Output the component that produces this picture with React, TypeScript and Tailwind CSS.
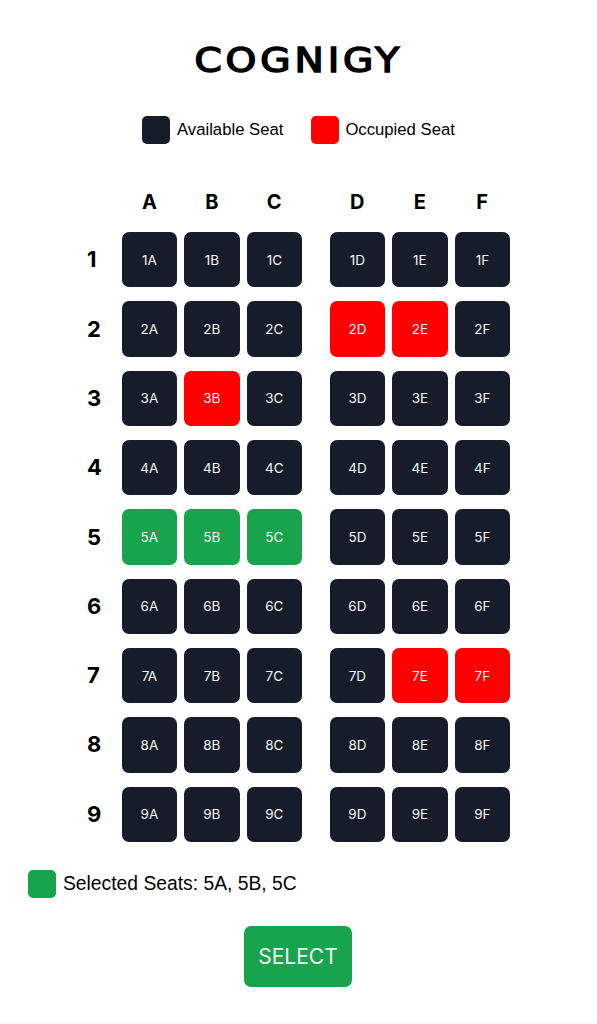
const columnsLeft = ["A", "B", "C"];
const columnsRight = ["D", "E", "F"];
const rows = [1, 2, 3, 4, 5, 6, 7, 8, 9];
const occupied = ["2D", "2E", "3B", "7E", "7F"];
const selected = ["5A", "5B", "5C"];

function Seat({ id }: { id: string }) {
  const color = occupied.includes(id)
    ? "bg-[#ff0000]"
    : selected.includes(id)
      ? "bg-[#17a44d]"
      : "bg-[#161c29]";
  return (
    <div
      className={`flex h-[55.4px] w-[55.4px] items-center justify-center rounded-[7px] font-['Inter',sans-serif] text-[13.5px] font-normal text-[#f3f4f6] ${color}`}
    >
      {id}
    </div>
  );
}

function Head({ c }: { c: string }) {
  return <div className="w-[55.4px] text-center text-[20px] leading-[24px] font-bold text-black">{c}</div>;
}

export default function App() {
  return (
    <div className="flex h-[1024px] w-[597px] flex-col overflow-hidden bg-white font-['Inter',sans-serif] text-black">
      <div className="mt-[38px] flex justify-center">
        <span className="scale-x-[1.15] font-['DejaVu_Sans',sans-serif] text-[34px] leading-[44px] font-normal tracking-[3.4px] [-webkit-text-stroke:1.5px_black]">
          COGNIGY
        </span>
      </div>

      <div className="mt-[34px] flex items-center pl-[142px] font-['Liberation_Sans',sans-serif] text-[16.7px] leading-[28px]">
        <div className="h-[28px] w-[28px] rounded-[5px] bg-[#161c29]" />
        <span className="ml-[7px]">Available Seat</span>
        <div className="ml-[28px] h-[28px] w-[28px] rounded-[5px] bg-[#ff0000]" />
        <span className="ml-[6px]">Occupied Seat</span>
      </div>

      <div className="mt-[46px] flex pl-[121.7px]">
        <div className="flex gap-[7px]">
          {columnsLeft.map((c) => (
            <Head key={c} c={c} />
          ))}
        </div>
        <div className="ml-[27.7px] flex gap-[7.1px]">
          {columnsRight.map((c) => (
            <Head key={c} c={c} />
          ))}
        </div>
      </div>

      <div className="mt-[18px] flex flex-col gap-[13.95px]">
        {rows.map((r) => (
          <div key={r} className="flex items-center">
            <div className="w-[121.7px] pl-[87px] text-[22px] font-bold">{r}</div>
            <div className="flex gap-[7.1px]">
              {columnsLeft.map((c) => (
                <Seat key={c} id={`${r}${c}`} />
              ))}
            </div>
            <div className="ml-[27.7px] flex gap-[7.1px]">
              {columnsRight.map((c) => (
                <Seat key={c} id={`${r}${c}`} />
              ))}
            </div>
          </div>
        ))}
      </div>

      <div className="mt-[28px] flex items-center pl-[28px] font-['Liberation_Sans',sans-serif] text-[19.3px] leading-[28px]">
        <div className="h-[28px] w-[28px] rounded-[5px] bg-[#17a44d]" />
        <span className="ml-[7px]">Selected Seats: 5A, 5B, 5C</span>
      </div>

      <div className="mt-[28px] flex justify-center pr-[1px]">
        <button className="h-[61px] w-[108px] rounded-[7px] bg-[#17a44d] pt-[1px] font-['Inter',sans-serif] text-[21px] font-normal text-[#f3f4f6]">
          SELECT
        </button>
      </div>

      <div className="mt-auto h-[2px] bg-[#fafafa]" />
    </div>
  );
}
